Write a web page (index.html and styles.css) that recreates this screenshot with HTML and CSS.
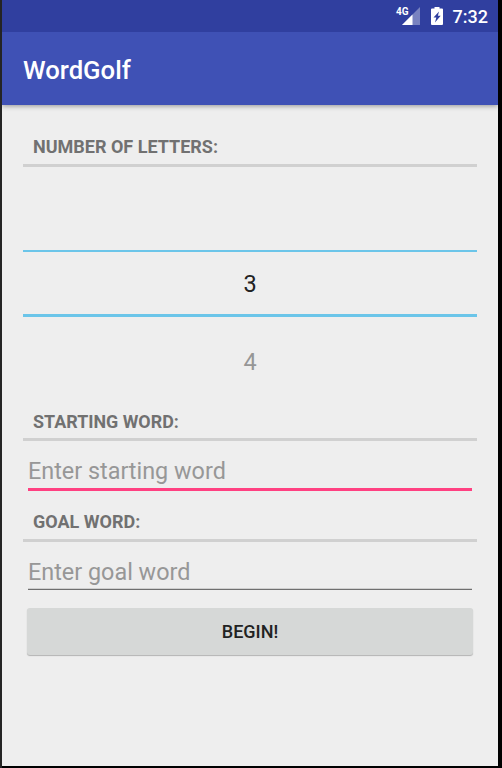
FILE: index.html
```html
<!DOCTYPE html>
<html lang="en">
<head>
<meta charset="utf-8">
<title>WordGolf</title>
<link rel="stylesheet" href="styles.css">
</head>
<body>
<div class="screen">
  <div class="status-bar">
    <span class="network">4G</span>
    <svg class="signal" width="18" height="18" viewBox="0 0 18 18"><path d="M18 0V18H0Z" fill="#fff" fill-opacity=".35"/><path d="M10.5 7.5V18H0Z" fill="#fff"/></svg>
    <svg class="battery" width="12" height="18" viewBox="0 0 12 18"><path fill="#fff" fill-rule="evenodd" d="M3.500 0h5v1.500H11q1 0 1 1V17q0 1-1 1H1q-1 0-1-1V2.500q0-1 1-1h2.500ZM8 4.500 2.500 10.500H5.300L4 15.500 9.700 8.800H6.900Z"/></svg>
    <span class="clock">7:32</span>
  </div>
  <header class="app-bar"><h1>WordGolf</h1></header>
  <main class="content">
    <h2 class="section first"><span>Number of letters:</span></h2>
    <div class="picker">
      <div class="slot"></div>
      <div class="slot selected">3</div>
      <div class="slot next">4</div>
    </div>
    <h2 class="section"><span>Starting word:</span></h2>
    <input class="field focused" type="text" placeholder="Enter starting word" aria-label="Starting word">
    <h2 class="section goal"><span>Goal word:</span></h2>
    <input class="field" type="text" placeholder="Enter goal word" aria-label="Goal word">
    <button class="begin" type="button">Begin!</button>
  </main>
</div>
</body>
</html>
```
FILE: styles.css
```css
* { box-sizing: border-box; }
html { height: 100%; background: #000; }
body {
  margin: 0;
  width: 502px;
  height: 768px;
  padding: 0 4px 2px 2px;
  background: linear-gradient(90deg, #242424 2px, #000 2px);
  font-family: Roboto, "Liberation Sans", sans-serif;
  overflow: hidden;
}
.screen {
  height: 766px;
  background: #eee;
  display: flex;
  flex-direction: column;
  overflow: hidden;
}
.status-bar {
  height: 32px;
  background: #303f9f;
  color: #fff;
  display: flex;
  justify-content: flex-end;
  align-items: flex-start;
  padding: 7px 10px 0 0;
  position: relative;
  z-index: 1;
}
.network { font-size: 10px; line-height: 10px; font-weight: 700; margin-right: -7px; }
.signal { margin-right: 11px; }
.battery { margin-right: 10px; }
.clock { font-size: 18px; line-height: 20px; font-weight: 500; }
.app-bar {
  height: 73px;
  background: #3f51b5;
  padding-left: 21px;
  display: flex;
  align-items: center;
  box-shadow: 0 1px 5px rgba(0, 0, 0, .38);
}
.app-bar h1 {
  margin: 2px 0 0;
  color: #fff;
  font-size: 25.700px;
  line-height: 30px;
  font-weight: 500;
}
.content {
  padding: 0 21px;
  display: flex;
  flex-direction: column;
}
.section {
  margin: 0;
  height: 38px;
  padding: 9px 0 0 10px;
  border-bottom: 3px solid #d0d0d0;
  color: #717171;
  font-size: 17.900px;
  line-height: 20px;
  font-weight: 700;
  text-transform: uppercase;
}
.section.first { margin-top: 24px; padding-top: 8px; font-size: 18px; }
.section.goal { height: 40px; padding-top: 10px; margin-top: 11px; font-size: 18px; }
.picker { height: 236px; font-size: 23.500px; color: #222; }
.slot { height: 83px; display: flex; align-items: center; justify-content: center; }
.slot.selected {
  height: 67px;
  border-top: 2px solid #6bc5e9;
  border-bottom: 3px solid #6bc5e9;
  padding-top: 2px;
}
.slot.next { color: #969696; height: 89px; }
.field {
  width: 444px;
  height: 48px;
  margin: 0 5px;
  padding: 12px 0 0;
  border: 0;
  border-bottom: 1px solid #6f6f6f;
  box-shadow: inset 0 -1px #cfcfcf;
  background: transparent;
  outline: 0;
  font: 400 23.380px/30px Roboto, "Liberation Sans", sans-serif;
  color: #222;
}
.field::placeholder { color: #979797; opacity: 1; }
.field.focused {
  height: 50px;
  padding-top: 12px;
  border-bottom: 3px solid #ff4081;
  box-shadow: none;
}
.begin {
  height: 47px;
  margin: 18px 4px 0 4px;
  border: 0;
  border-radius: 3px;
  background: #d6d8d7;
  box-shadow: 0 1px 1px rgba(0, 0, 0, .25);
  color: #222;
  font: 500 18px/20px Roboto, "Liberation Sans", sans-serif;
  text-transform: uppercase;
}
```
